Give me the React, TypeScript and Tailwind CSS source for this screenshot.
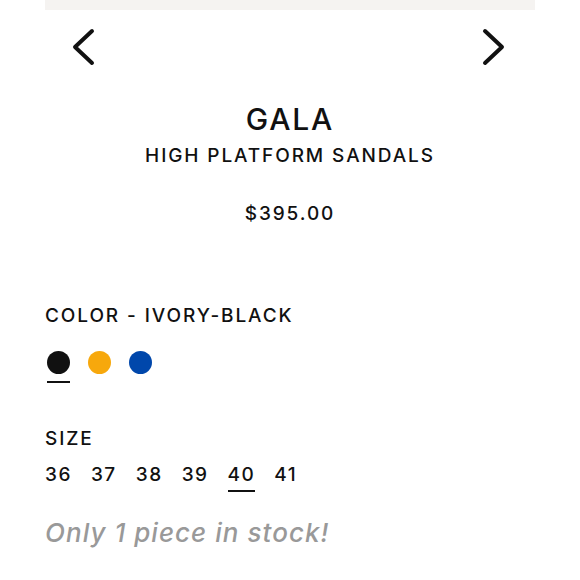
import React, { useState } from "react";

const colors = [
  { name: "IVORY-BLACK", hex: "bg-[#111111]" },
  { name: "YELLOW", hex: "bg-[#f7a80c]" },
  { name: "BLUE", hex: "bg-[#0047ab]" },
];

const sizes = ["36", "37", "38", "39", "40", "41"];

function Chevron({ dir }: { dir: "left" | "right" }) {
  return (
    <svg width="24" height="38" viewBox="0 0 24 38" fill="none">
      <path
        d={dir === "left" ? "M20 3 L3 19 L20 35" : "M4 3 L21 19 L4 35"}
        stroke="#111"
        strokeWidth="4"
        strokeLinecap="round"
        strokeLinejoin="round"
      />
    </svg>
  );
}

export default function App() {
  const [color, setColor] = useState(0);
  const [size, setSize] = useState("40");

  return (
    <div className="w-[580px] h-[580px] overflow-hidden bg-white text-[#111] font-['Inter','Liberation_Sans',Arial,sans-serif] font-medium">
      <div className="mx-[45px] h-[10px] bg-[#f5f3f1]" />

      <div className="flex justify-between pl-[72px] pr-[75px] pt-[18px]">
        <button aria-label="Previous"><Chevron dir="left" /></button>
        <button aria-label="Next"><Chevron dir="right" /></button>
      </div>

      <div className="mt-[35px] flex flex-col items-center">
        <h1 className="text-[30px] leading-[36px] tracking-[0.06em] font-medium">GALA</h1>
        <h2 className="mt-[7px] text-[19px] leading-[24px] tracking-[0.1em]">HIGH PLATFORM SANDALS</h2>
        <p className="mt-[34px] text-[19px] leading-[24px] tracking-[0.1em]">$395.00</p>
      </div>

      <div className="px-[45px] pt-[78px]">
        <p className="text-[19px] leading-[24px] tracking-[0.1em]">COLOR - {colors[color].name}</p>
        <div className="mt-[23px] flex gap-[18px] pl-[2px]">
          {colors.map((c, i) => (
            <button key={c.name} onClick={() => setColor(i)} className="flex flex-col items-center">
              <span className={`block w-[23px] h-[23px] rounded-full ${c.hex}`} />
              <span className={`mt-[7px] block w-[23px] h-[2px] ${i === color ? "bg-[#111]" : "bg-transparent"}`} />
            </button>
          ))}
        </div>

        <p className="mt-[44px] text-[19px] leading-[24px] tracking-[0.1em]">SIZE</p>
        <div className="mt-[12px] flex gap-[19px]">
          {sizes.map((s) => (
            <button key={s} onClick={() => setSize(s)} className="flex flex-col">
              <span className="text-[19px] leading-[24px] tracking-[0.08em]">{s}</span>
              <span className={`mt-[3px] block h-[2px] w-full ${s === size ? "bg-[#111]" : "bg-transparent"}`} />
            </button>
          ))}
        </div>

        <p className="mt-[25px] text-[26px] leading-[32px] italic tracking-[0.04em] text-[#999]">Only 1 piece in stock!</p>
      </div>
    </div>
  );
}
